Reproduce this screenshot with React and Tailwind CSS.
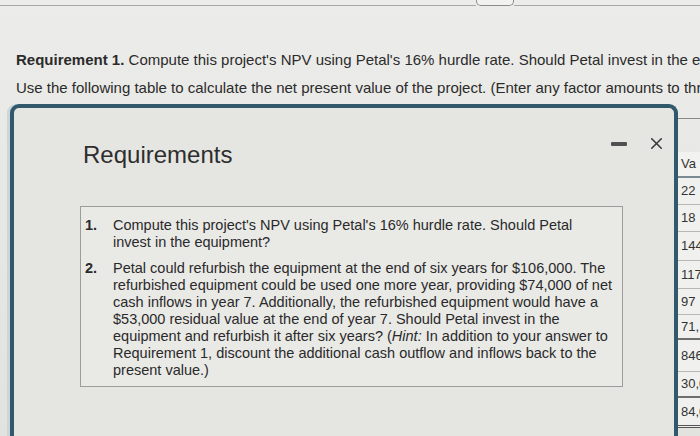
import { X } from "lucide-react";

const tableRows = [
	{ text: "Va", h: "h-[26px]", cls: "border-b-2 border-[#7a8a92] bg-[#f2f2f0]" },
	{ text: "22", h: "h-[27px]", cls: "border-b border-[#b8b8b6]" },
	{ text: "18", h: "h-[27px]", cls: "border-b border-[#b8b8b6]" },
	{ text: "144", h: "h-[29px]", cls: "border-b border-[#b8b8b6]" },
	{ text: "117", h: "h-[28px]", cls: "border-b border-[#b8b8b6]" },
	{ text: "97", h: "h-[26px]", cls: "border-b border-[#b8b8b6]" },
	{ text: "71,", h: "h-[25px]", cls: "border-b-2 border-[#6f6f6f]" },
	{ text: "846,", h: "h-[32px]", cls: "border-b border-[#b8b8b6]" },
	{ text: "30,0", h: "h-[26px]", cls: "border-b-2 border-[#6f6f6f]" },
	{ text: "84,0", h: "h-[30px]", cls: "border-b-[3px] border-double border-[#555]" },
];

const item2 = [
	"Petal could refurbish the equipment at the end of six years for $106,000. The",
	"refurbished equipment could be used one more year, providing $74,000 of net",
	"cash inflows in year 7. Additionally, the refurbished equipment would have a",
	"$53,000 residual value at the end of year 7. Should Petal invest in the",
];

const App = () => {
	return (
		<div className="w-[700px] h-[436px] overflow-hidden bg-gradient-to-b from-[#ececea] to-[#e2e2de] text-[#2b2b2b] font-['Liberation_Sans',Arial,sans-serif]">
			{/* top edge of the previous frame */}
			<div className="flex h-[6px]">
				<div className="w-[476px] border-b border-[#a8aaa8]" />
				<div className="w-[38px] h-[6px] border border-t-0 border-[#8c8c8c] rounded-b-[5px] bg-[#f2f2f0]" />
				<div className="flex-1 border-b border-[#a8aaa8]" />
			</div>

			{/* question text */}
			<div className="pt-[44px] pl-[16px] text-[15px] leading-[20px] whitespace-nowrap">
				<p>
					<span className="font-bold">Requirement 1.</span> Compute this
					project's NPV using Petal's 16% hurdle rate. Should Petal invest in
					the equipment?
				</p>
				<p className="mt-[8px]">
					Use the following table to calculate the net present value of the
					project. (Enter any factor amounts to three decimal places.)
				</p>
			</div>

			<div className="flex mt-[6px] pl-[10px]">
				{/* requirements dialog */}
				<div className="w-[668px] h-[340px] shrink-0 border-[4px] border-b-0 border-[#31586b] rounded-t-[9px] bg-[#e5e5e1] shadow-[-3px_0_0_#c9d6da]">
					<div className="flex items-start justify-between pt-[33px] pl-[69px] pr-[8px]">
						<h2 className="text-[24px] leading-[28px] text-[#2e2e2e]">
							Requirements
						</h2>
						<div className="flex items-center gap-[20px] -mt-[7px]">
							<div className="w-[16px] h-[4px] rounded-[1px] bg-[#505050]" />
							<X size={19} strokeWidth={2} color="#3c3c3c" />
						</div>
					</div>

					<div className="ml-[66px] mr-[51px] mt-[37px] h-[181px] border border-[#9c9c9a] bg-[#e9e9e6] pt-[10px] pl-[4px] text-[14.5px] leading-[17px] text-[#2a2a2a]">
						<ol>
							<li className="flex">
								<span className="w-[28px] shrink-0 font-bold">1.</span>
								<span>
									Compute this project's NPV using Petal's 16% hurdle rate.
									Should Petal
									<br />
									invest in the equipment?
								</span>
							</li>
							<li className="flex mt-[9px]">
								<span className="w-[28px] shrink-0 font-bold">2.</span>
								<span className="whitespace-nowrap">
									{item2.map((line) => (
										<span key={line} className="block">
											{line}
										</span>
									))}
									<span className="block">
										equipment and refurbish it after six years? (<i>Hint:</i>{" "}
										In addition to your answer to
									</span>
									<span className="block">
										Requirement 1, discount the additional cash outflow and
										inflows back to the
									</span>
									<span className="block">present value.)</span>
								</span>
							</li>
						</ol>
					</div>
				</div>

				{/* table peeking out behind the dialog */}
				<div className="flex-1 flex flex-col pt-[14px] text-[13px] text-[#333] whitespace-nowrap overflow-hidden">
					<div className="h-[34px] border-t border-[#8a8a8a]" />
					{tableRows.map((r) => (
						<div
							key={r.text}
							className={`${r.h} ${r.cls} flex items-center pl-[3px] bg-[#f0f0ee]`}
						>
							{r.text}
						</div>
					))}
				</div>
			</div>
		</div>
	);
};

export default App;
